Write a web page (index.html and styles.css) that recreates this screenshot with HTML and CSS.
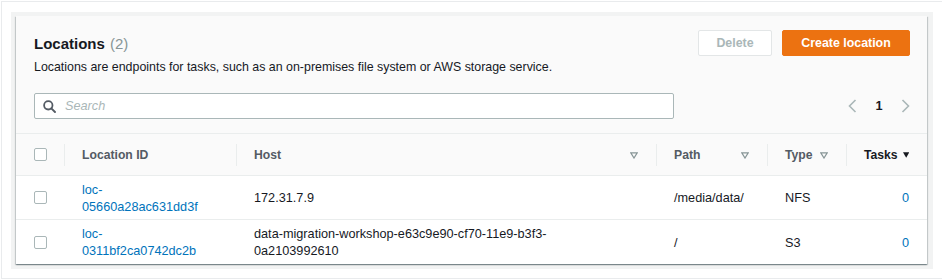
FILE: index.html
```html
<!DOCTYPE html>
<html lang="en">
<head>
<meta charset="utf-8">
<title>Locations</title>
<link rel="stylesheet" href="styles.css">
</head>
<body>
<div class="frame">
  <div class="bg">
    <div class="card">
      <div class="card-header">
        <div class="head-top">
          <div class="titles">
            <h2 class="title">Locations <span class="count">(2)</span></h2>
            <p class="desc">Locations are endpoints for tasks, such as an on-premises file system or AWS storage service.</p>
          </div>
          <div class="actions">
            <button class="btn btn-disabled" type="button">Delete</button>
            <button class="btn btn-primary" type="button">Create location</button>
          </div>
        </div>
        <div class="tools">
          <div class="search">
            <svg class="search-icon" width="13" height="13" viewBox="0 0 13 13"><circle cx="5.3" cy="5.3" r="4.2" fill="none" stroke="#545b64" stroke-width="1.8"/><line x1="8.3" y1="8.3" x2="12" y2="12" stroke="#545b64" stroke-width="1.9" stroke-linecap="round"/></svg>
            <span class="placeholder">Search</span>
          </div>
          <div class="pager">
            <svg width="9" height="14" viewBox="0 0 9 14"><polyline points="7.5,1 1.5,7 7.5,13" fill="none" stroke="#aab7b8" stroke-width="1.6"/></svg>
            <span class="page">1</span>
            <svg width="9" height="14" viewBox="0 0 9 14"><polyline points="1.5,1 7.5,7 1.5,13" fill="none" stroke="#aab7b8" stroke-width="1.6"/></svg>
          </div>
        </div>
      </div>
      <div class="table">
        <div class="trow thead">
          <div class="cell cb-cell"><span class="checkbox"></span></div>
          <div class="cell hcell"><span>Location ID</span></div>
          <div class="cell hcell"><span>Host</span><svg class="sort" width="8" height="7" viewBox="0 0 8 7"><polygon points="0.8,0.8 7.2,0.8 4,6" fill="none" stroke="#879596" stroke-width="1.2"/></svg></div>
          <div class="cell hcell"><span>Path</span><svg class="sort" width="8" height="7" viewBox="0 0 8 7"><polygon points="0.8,0.8 7.2,0.8 4,6" fill="none" stroke="#879596" stroke-width="1.2"/></svg></div>
          <div class="cell hcell"><span>Type</span><svg class="sort" width="8" height="7" viewBox="0 0 8 7"><polygon points="0.8,0.8 7.2,0.8 4,6" fill="none" stroke="#879596" stroke-width="1.2"/></svg></div>
          <div class="cell hcell sorted"><span>Tasks</span><svg class="sort" width="8" height="8" viewBox="0 0 8 8"><polygon points="0,0.5 8,0.5 4,7.5" fill="#16191f"/></svg></div>
        </div>
        <div class="trow tbody">
          <div class="cell cb-cell"><span class="checkbox"></span></div>
          <div class="cell"><a class="link id-link" href="#">loc-05660a28ac631dd3f</a></div>
          <div class="cell"><span class="host">172.31.7.9</span></div>
          <div class="cell">/media/data/</div>
          <div class="cell">NFS</div>
          <div class="cell num"><a class="link" href="#">0</a></div>
        </div>
        <div class="trow tbody">
          <div class="cell cb-cell"><span class="checkbox"></span></div>
          <div class="cell"><a class="link id-link" href="#">loc-0311bf2ca0742dc2b</a></div>
          <div class="cell"><span class="host">data-migration-workshop-e63c9e90-cf70-11e9-b3f3-0a2103992610</span></div>
          <div class="cell">/</div>
          <div class="cell">S3</div>
          <div class="cell num"><a class="link" href="#">0</a></div>
        </div>
      </div>
    </div>
  </div>
</div>
</body>
</html>
```
FILE: styles.css
```css
* { box-sizing: border-box; }
body {
  margin: 0;
  background: #fff;
  color: #16191f;
  font-family: "Liberation Sans", Arial, sans-serif;
  font-size: 12.7px;
}
.frame {
  margin: 1px 0 0 1px;
  width: 941px;
  height: 278px;
  border: 1px solid #e9ebed;
  border-right: 0;
  padding: 10px 0 0 9px;
}
.bg {
  width: 922px;
  background: #f2f3f3;
  padding: 4px 6px 5px 5px;
}
.card {
  background: #fff;
  box-shadow: 0 1px 1px 0 rgba(0, 28, 36, .3), 1px 1px 1px 0 rgba(0, 28, 36, .15), -1px 1px 1px 0 rgba(0, 28, 36, .15);
}
.card-header {
  background: #fafafa;
  border-bottom: 1px solid #eaeded;
  padding: 14px 17px 14px 18px;
}
.head-top {
  display: flex;
  justify-content: space-between;
  align-items: flex-start;
}
.titles { padding-top: 3px; }
.title {
  margin: 0;
  font-size: 15px;
  line-height: 22px;
  font-weight: 700;
}
.count { color: #879596; font-weight: 400; margin-left: 1px; }
.desc {
  margin: 2px 0 0;
  line-height: 20px;
  font-size: 12.4px;
}
.actions { display: flex; gap: 10px; }
.btn {
  height: 26px;
  border-radius: 2px;
  font-family: inherit;
  font-size: 12.4px;
  font-weight: 700;
  padding: 0;
  white-space: nowrap;
  border: 1px solid transparent;
}
.btn-disabled {
  width: 74px;
  background: #fff;
  border-color: #e3e6e7;
  color: #aab7b8;
}
.btn-primary {
  width: 128px;
  background: #ec7211;
  border-color: #ec7211;
  color: #fff;
}
.tools {
  margin-top: 16px;
  display: flex;
  justify-content: space-between;
  align-items: center;
}
.search {
  width: 640px;
  height: 26px;
  border: 1px solid #aab7b8;
  border-radius: 2px;
  background: #fff;
  display: flex;
  align-items: center;
  padding-left: 8px;
  gap: 9px;
}
.placeholder { color: #aab7b8; font-style: italic; }
.pager {
  display: flex;
  align-items: center;
}
.page {
  font-weight: 700;
  width: 44px;
  text-align: center;
}
.trow {
  display: grid;
  grid-template-columns: 48px 172px 420px 111px 79px 81px;
}
.thead {
  height: 42px;
  background: #fafafa;
  border-bottom: 1px solid #eaeded;
  align-items: center;
  color: #545b64;
  font-weight: 700;
  font-size: 12.2px;
  padding-top: 1px;
}
.tbody {
  height: 44px;
  border-bottom: 1px solid #eaeded;
  align-items: center;
  padding-top: 2px;
}
.tbody:last-child { border-bottom: 0; }
.cell {
  padding: 0 18px;
  display: flex;
  align-items: center;
  line-height: 17px;
}
.cb-cell { padding: 0 0 0 18px; }
.tbody .cb-cell { margin-top: -2px; }
.thead .cb-cell { margin-top: -1px; }
.hcell {
  height: 22px;
  border-left: 1px solid #eaeded;
  padding-left: 17px;
  justify-content: space-between;
  gap: 5px;
}
.sorted { color: #16191f; }
.checkbox {
  width: 13px;
  height: 13px;
  border: 1px solid #aab7b8;
  border-radius: 2px;
  background: #fff;
}
.link { color: #0073bb; text-decoration: none; }
.id-link { max-width: 130px; }
.host { max-width: 320px; }
.num { justify-content: flex-end; }
```
